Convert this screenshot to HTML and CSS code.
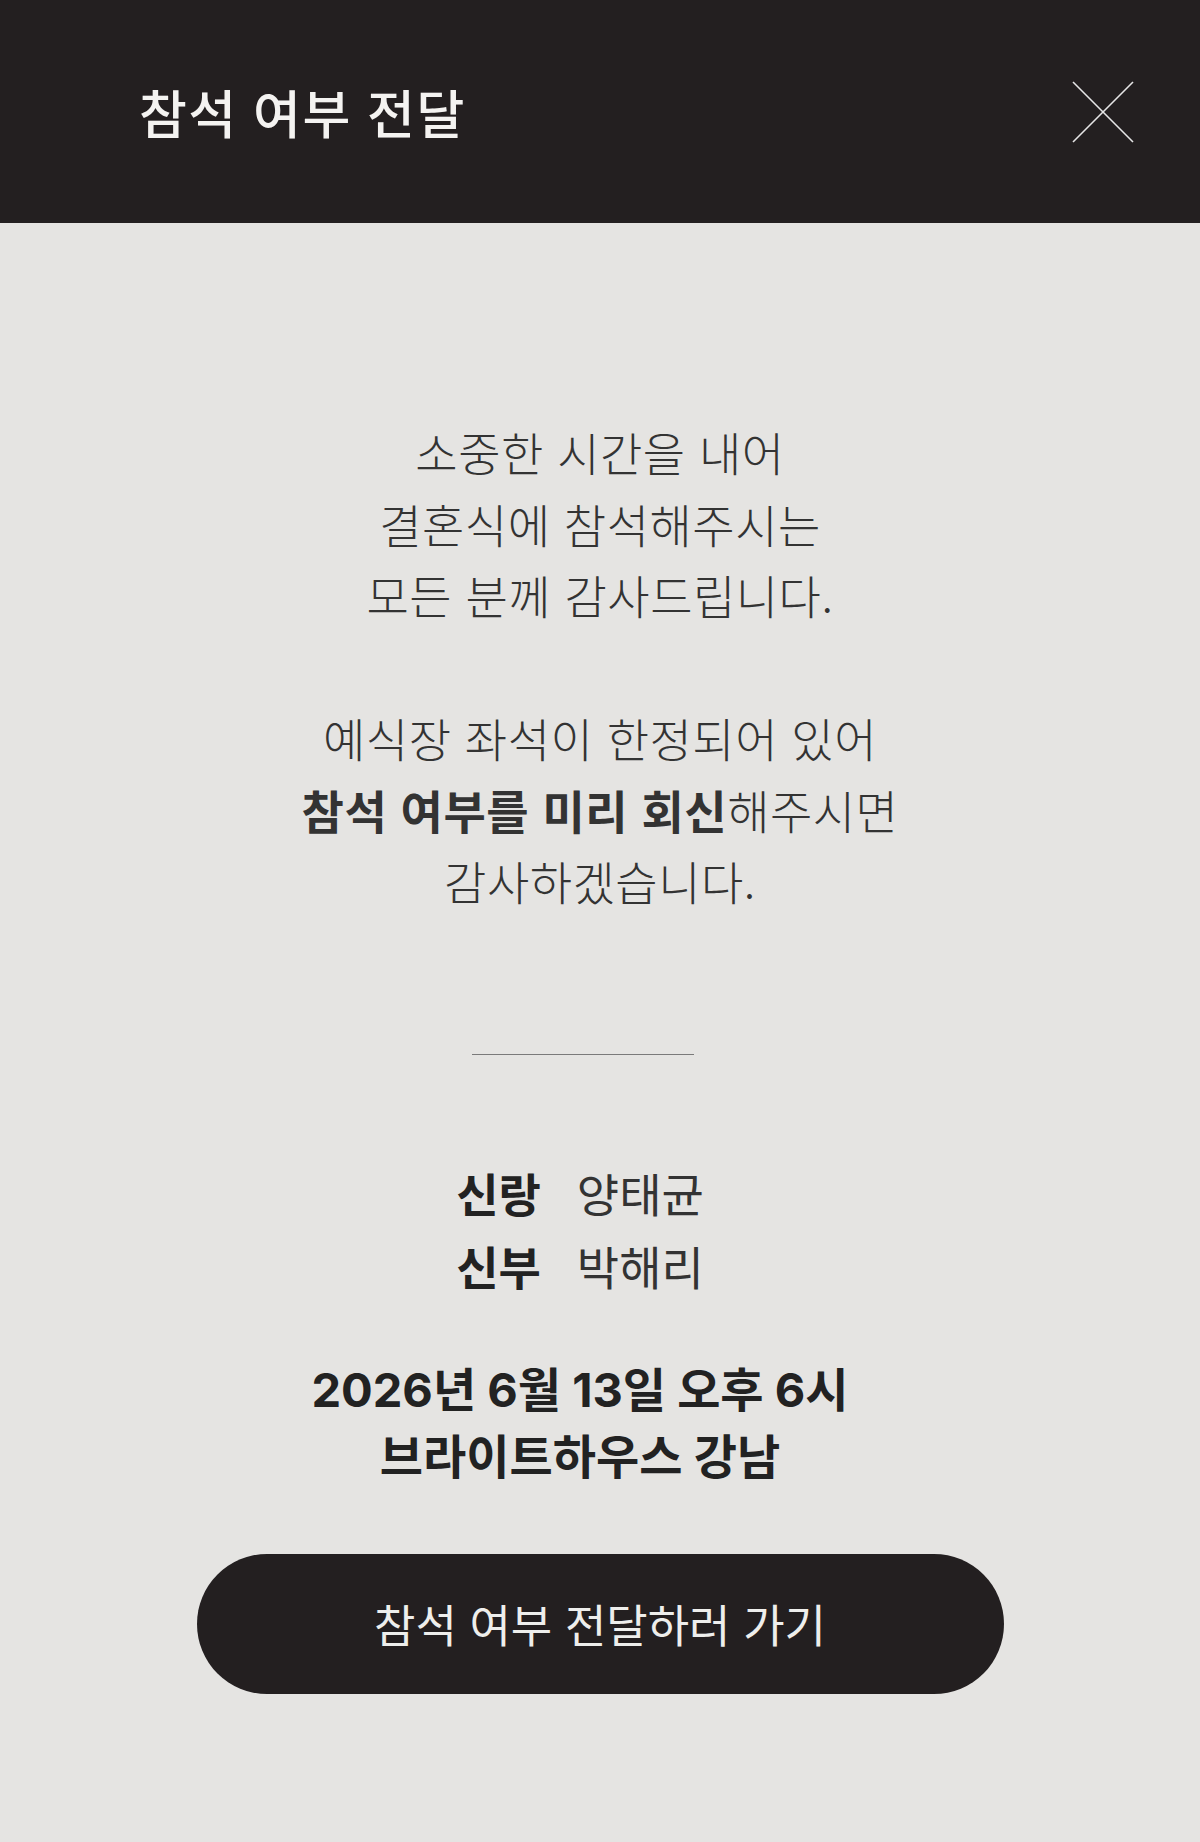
FILE: index.html
```html
<!DOCTYPE html>
<html lang="ko">
<head>
    <meta charset="UTF-8">
    <meta name="viewport" content="width=device-width, initial-scale=1.0">
    <title>참석 여부 전달</title>
    <link rel="stylesheet" href="styles.css">
</head>
<body>
    <div class="modal">
        <header class="modal-header">
            <h1>참석 여부 전달</h1>
            <button class="close-button" type="button" aria-label="닫기">
                <svg width="62" height="62" viewBox="0 0 62 62">
                    <line x1="1" y1="1" x2="61" y2="61" />
                    <line x1="61" y1="1" x2="1" y2="61" />
                </svg>
            </button>
        </header>
        <main class="modal-body">
            <p class="message">
                소중한 시간을 내어<br>
                결혼식에 참석해주시는<br>
                모든 분께 감사드립니다.<br>
                <br>
                예식장 좌석이 한정되어 있어<br>
                <strong>참석 여부를 미리 회신</strong>해주시면<br>
                감사하겠습니다.
            </p>
            <hr class="divider">
            <dl class="couple">
                <dt>신랑</dt>
                <dd>양태균</dd>
                <dt>신부</dt>
                <dd>박해리</dd>
            </dl>
            <div class="event-info">
                <p>2026년 6월 13일 오후 6시</p>
                <p>브라이트하우스 강남</p>
            </div>
            <a class="rsvp-button" href="#">참석 여부 전달하러 가기</a>
        </main>
    </div>
</body>
</html>
```

FILE: styles.css
```css
body {
    margin: 0;
    padding: 0;
    background-color: #e5e4e2;
    font-family: Inter, "Noto Sans CJK KR", sans-serif;
    color: #222;
}
.modal {
    min-height: 1842px;
    background-color: #e5e4e2;
}
.modal-header {
    height: 223px;
    display: flex;
    align-items: center;
    justify-content: space-between;
    padding: 0 66px 0 139px;
    background-color: #231f20;
}
.modal-header h1 {
    margin: 0;
    font-size: 52px;
    font-weight: 500;
    color: #f4f3f1;
    letter-spacing: 1.5px;
}
.close-button {
    padding: 0;
    border: none;
    background: none;
    cursor: pointer;
    display: flex;
}
.close-button line {
    stroke: #e6e6e6;
    stroke-width: 1.6;
}
.modal-body {
    display: flex;
    flex-direction: column;
    align-items: center;
    padding-top: 193px;
}
.message {
    margin: 0;
    font-family: "Noto Sans CJK KR", sans-serif;
    font-size: 46px;
    font-weight: 300;
    line-height: 71.5px;
    letter-spacing: 0.5px;
    text-align: center;
    color: #333;
}
.message strong {
    font-weight: 700;
}
.divider {
    width: 222px;
    margin: 137px 34px 0 0;
    border: none;
    border-top: 1px solid #7a7a7a;
}
.couple {
    display: grid;
    grid-template-columns: auto auto;
    column-gap: 36px;
    margin: 104px 40px 0 0;
    font-size: 46px;
    line-height: 73px;
}
.couple dt {
    font-weight: 700;
    color: #222;
}
.couple dd {
    margin: 0;
    font-weight: 400;
    color: #333;
}
.event-info {
    margin: 51px 40px 0 0;
    text-align: center;
    font-size: 47px;
    font-weight: 700;
    line-height: 67px;
}
.event-info p {
    margin: 0;
}
.rsvp-button {
    display: flex;
    align-items: center;
    justify-content: center;
    width: 807px;
    height: 140px;
    margin-top: 64px;
    border-radius: 70px;
    background-color: #231f20;
    color: #eeeeec;
    font-size: 45px;
    font-weight: 400;
    text-decoration: none;
}
```
